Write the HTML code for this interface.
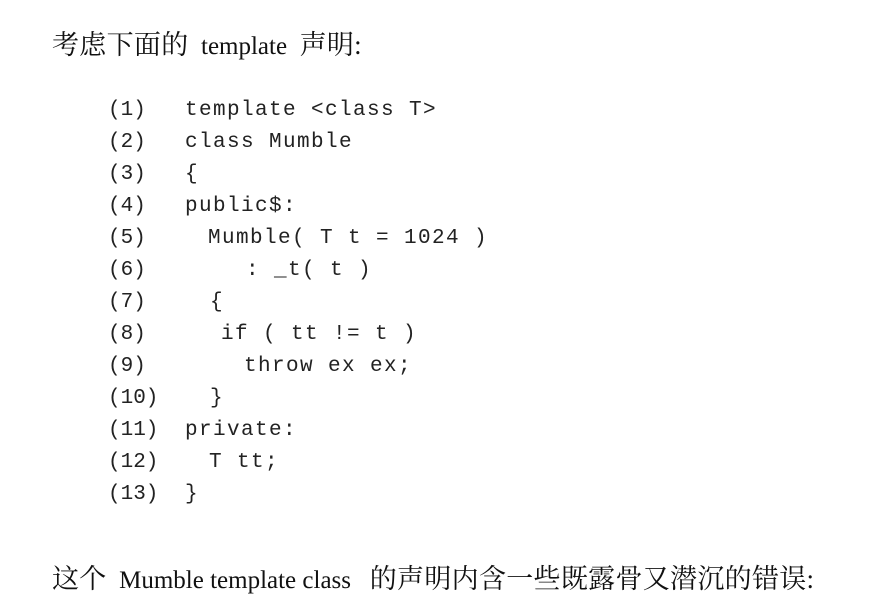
<!DOCTYPE html>
<html><head><meta charset="utf-8"><style>
body{margin:0;width:884px;height:610px;background:#fff;position:relative;overflow:hidden;color:#111}
.t{position:absolute;font-family:"Liberation Serif","Noto Serif CJK SC",serif;font-size:25px;white-space:pre}
.z{font-size:27px;letter-spacing:0.3px}
.n,.c{position:absolute;font-family:"Liberation Mono",monospace;font-size:21px;white-space:pre;color:#222}
.n{left:108px}
.c{letter-spacing:1.4px}
</style></head><body>
<div class="t" style="left:52px;top:23px"><span class="z">考虑下面的</span>  template  <span class="z">声明:</span></div>
<div class="n" style="top:99px">(1)</div><div class="c" style="left:185px;top:99px">template &lt;class T&gt;</div>
<div class="n" style="top:131px">(2)</div><div class="c" style="left:185px;top:131px">class Mumble</div>
<div class="n" style="top:163px">(3)</div><div class="c" style="left:185px;top:163px">{</div>
<div class="n" style="top:195px">(4)</div><div class="c" style="left:185px;top:195px">public$:</div>
<div class="n" style="top:227px">(5)</div><div class="c" style="left:208px;top:227px">Mumble( T t = 1024 )</div>
<div class="n" style="top:259px">(6)</div><div class="c" style="left:246px;top:259px">: _t( t )</div>
<div class="n" style="top:291px">(7)</div><div class="c" style="left:210px;top:291px">{</div>
<div class="n" style="top:323px">(8)</div><div class="c" style="left:221px;top:323px">if ( tt != t )</div>
<div class="n" style="top:355px">(9)</div><div class="c" style="left:244px;top:355px">throw ex ex;</div>
<div class="n" style="top:387px">(10)</div><div class="c" style="left:210px;top:387px">}</div>
<div class="n" style="top:419px">(11)</div><div class="c" style="left:185px;top:419px">private:</div>
<div class="n" style="top:451px">(12)</div><div class="c" style="left:209px;top:451px">T tt;</div>
<div class="n" style="top:483px">(13)</div><div class="c" style="left:185px;top:483px">}</div>
<div class="t" style="left:52px;top:557px"><span class="z">这个</span>  Mumble template class   <span class="z">的声明内含一些既露骨又潜沉的错误:</span></div>
</body></html>
